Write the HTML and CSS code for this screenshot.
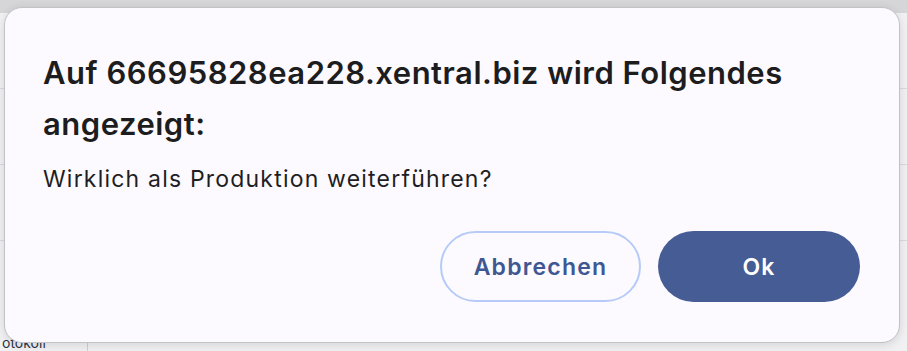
FILE: index.html
```html
<!DOCTYPE html>
<html lang="de">
<head>
<meta charset="utf-8">
<title>Dialog</title>
<link rel="stylesheet" href="styles.css">
</head>
<body>
<div class="page">
  <div class="topbar"></div>
  <div class="content">
    <div class="row"></div>
    <div class="row"></div>
    <div class="row"></div>
    <div class="footer-cell">otokoll</div>
  </div>
</div>
<div class="dialog" role="alertdialog">
  <h1 class="title">Auf 66695828ea228.xentral.biz wird Folgendes angezeigt:</h1>
  <p class="message">Wirklich als Produktion weiterführen?</p>
  <div class="actions">
    <button class="btn btn-secondary">Abbrechen</button>
    <button class="btn btn-primary">Ok</button>
  </div>
</div>
</body>
</html>
```
FILE: styles.css
```css
html, body {
  margin: 0;
  padding: 0;
  height: 100%;
}
body {
  background: #ececee;
  font-family: Inter, "Noto Sans", "Liberation Sans", sans-serif;
  overflow: hidden;
  position: relative;
}
.page {
  display: flex;
  flex-direction: column;
  height: 351px;
}
.topbar {
  height: 13px;
  background: #d6d6d9;
  flex: none;
}
.content {
  flex: 1;
  display: flex;
  flex-direction: column;
  background: #f1f1f3;
}
.row {
  height: 75px;
  border-bottom: 1px solid #d9d9dd;
}
.footer-cell {
  margin-top: auto;
  width: 88px;
  border-right: 1px solid #cfcfd3;
  box-sizing: border-box;
  height: 16px;
  padding-left: 2px;
  font-size: 14px;
  line-height: 16px;
  color: #2b3545;
  overflow: hidden;
}
.dialog {
  position: absolute;
  left: 4px;
  top: 7px;
  width: 896px;
  height: 336px;
  box-sizing: border-box;
  background: #fcfaff;
  border: 1px solid #c2c2c6;
  border-radius: 18px;
  box-shadow: 0 2px 10px rgba(0, 0, 0, 0.12);
  padding: 39px 39px 40px 38px;
  display: flex;
  flex-direction: column;
}
.title {
  margin: 0;
  font-size: 31px;
  font-weight: 600;
  line-height: 51px;
  color: #1d1d20;
  letter-spacing: 0.5px;
}
.message {
  margin: 14px 0 0;
  font-size: 23px;
  font-weight: 400;
  line-height: 32px;
  color: #1f1f23;
  letter-spacing: 1.2px;
}
.actions {
  margin-top: auto;
  display: flex;
  justify-content: flex-end;
  gap: 17px;
}
.btn {
  height: 71px;
  border-radius: 36px;
  font-family: inherit;
  font-size: 23px;
  font-weight: 600;
  letter-spacing: 1.2px;
  cursor: pointer;
  box-sizing: border-box;
}
.btn-secondary {
  width: 201px;
  background: #fcfaff;
  border: 2px solid #b6cbf7;
  color: #3f5793;
}
.btn-primary {
  width: 202px;
  background: #465c94;
  border: none;
  color: #ffffff;
}
```
